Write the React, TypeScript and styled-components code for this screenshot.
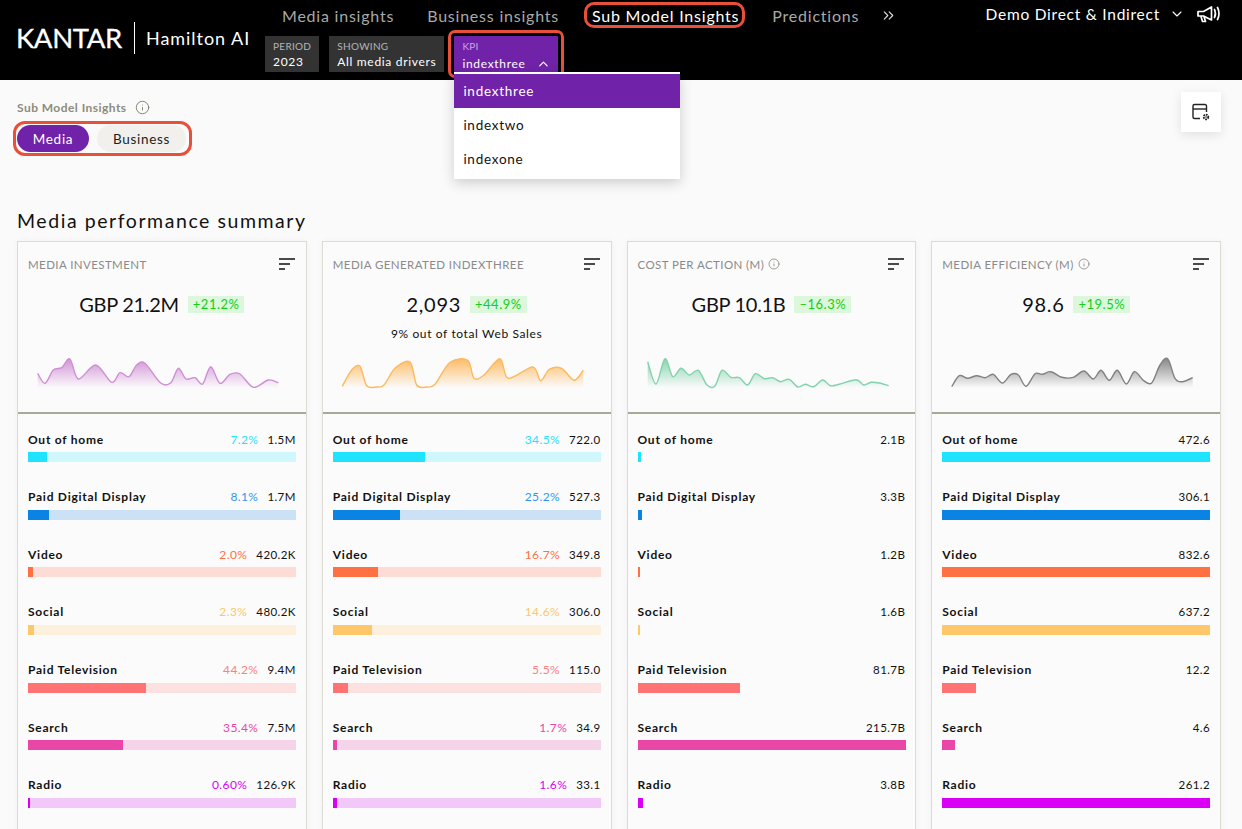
import React from "react";
import styled, { createGlobalStyle } from "styled-components";
import { Info, ChevronDown, ChevronUp, ChevronsRight } from "lucide-react";

const Global = createGlobalStyle`
  html, body { margin: 0; padding: 0; background: #fafafa; }
  body { font-family: "Lato", "Noto Sans", sans-serif; color: #111; overflow: hidden; }
  * { box-sizing: border-box; }
`;
const Page = styled.div`width: 1242px; height: 829px; overflow: hidden; background: #fafafa;`;
const Header = styled.header`position: relative; z-index: 2; display: flex; height: 80px; background: #000; color: #fff;`;
const Brand = styled.div`display: flex; align-items: center; width: 265px; height: 76px; padding-left: 16px;`;
const Logo = styled.span`font-size: 27.5px; line-height: 1; letter-spacing: -0.35px; font-weight: 400; width: 106px; white-space: nowrap; -webkit-text-stroke: 0.3px #fff;`;
const BrandRule = styled.span`width: 1px; height: 32px; margin: 0 11px 0 12px; background: #fff;`;
const Product = styled.span`font-size: 18px; letter-spacing: 0.95px; white-space: nowrap;`;
const Middle = styled.div`display: flex; flex-direction: column;`;
const Nav = styled.nav`display: flex; align-items: center; height: 30px; padding: 0 0 0 17px;`;
const NavItem = styled.span<{ $active?: boolean }>`
  position: relative; margin-right: 33px; font-size: 16px; letter-spacing: 0.78px; white-space: nowrap;
  color: ${p => p.$active ? "#fff" : "#a9a9a9"};
  ${p => p.$active && `
    &::after {
      content: ""; position: absolute; left: -8px; right: -6px; top: -4px; bottom: -3px;
      border: 3px solid #e8503a; border-radius: 10px;
    }
  `}
`;
const More = styled.span`display: flex; color: #ddd; margin-left: -12px;`;
const Chips = styled.div`display: flex; gap: 10px; margin-top: 6px;`;
const Chip = styled.div<{ $kpi?: boolean }>`
  position: relative; height: 36px; padding: 4px 8px; background: ${p => p.$kpi ? "#7023a8" : "#333"};
  ${p => p.$kpi && `outline: 3px solid #e8503a; outline-offset: 3px; border-radius: 1px; width: 104px;`}
`;
const ChipLabel = styled.div<{ $kpi?: boolean }>`font-size: 10px; line-height: 12px; letter-spacing: 0.3px; color: ${p => p.$kpi ? "#cda6e6" : "#b5b5b5"};`;
const ChipValue = styled.div`display: flex; align-items: center; gap: 10px; margin-top: 3px; font-size: 12px; line-height: 14px; letter-spacing: 0.68px; color: #fff; white-space: nowrap;`;
const Menu = styled.div`
  position: absolute; left: 0; top: 36px; width: 226px; height: 107px; padding-top: 2px; background: #fff;
  box-shadow: 0 4px 12px rgba(0,0,0,.18);
`;
const MenuItem = styled.div<{ $selected?: boolean }>`
  height: 34px; padding-left: 9px; display: flex; align-items: center;
  font-size: 13.5px; letter-spacing: 0.75px;
  background: ${p => p.$selected ? "#7023a8" : "#fff"}; color: ${p => p.$selected ? "#fff" : "#111"};
`;
const Account = styled.div`display: flex; align-items: center; margin-left: auto; height: 28px; padding-right: 21px; font-size: 15.5px; letter-spacing: 0.75px; white-space: nowrap;`;
const AccountIcon = styled.span`display: flex; margin: 0 12px 0 9px;`;
const Main = styled.main`padding: 0 21px 0 17px;`;
const Top = styled.div`display: flex; justify-content: space-between; align-items: flex-start; padding-top: 12px;`;
const Left = styled.div`padding-top: 7px;`;
const Crumb = styled.div`display: flex; align-items: center; gap: 8px; height: 16px; font-size: 12px; font-weight: 700; letter-spacing: 0.45px; color: #8c8c7c;`;
const Toggles = styled.div`
  display: inline-flex; gap: 8px; margin-top: 10px; padding-right: 2px; border-radius: 8px;
  outline: 3px solid #e8503a; outline-offset: 1px;
`;
const Toggle = styled.span<{ $on?: boolean }>`
  display: flex; align-items: center; justify-content: center; height: 27px; width: ${p => p.$on ? "72px" : "89px"};
  border-radius: 14px; font-size: 13.5px; letter-spacing: 0.7px;
  background: ${p => p.$on ? "#7023a8" : "#f1f0ed"}; color: ${p => p.$on ? "#fff" : "#222"};
`;
const SettingsButton = styled.div`
  display: flex; align-items: center; justify-content: center; width: 40px; height: 40px; background: #fff;
  box-shadow: 0 3px 10px rgba(0,0,0,.1);
`;
const Title = styled.h1`margin: 58px 0 9px; font-size: 19.5px; line-height: 22px; font-weight: 400; letter-spacing: 1.56px; color: #111;`;
const Grid = styled.div`display: grid; grid-template-columns: repeat(4, minmax(0, 1fr)); gap: 15px;`;
const Card = styled.section`border: 1px solid #dcdcd2; border-bottom: 0; height: 600px; box-shadow: 0 0 6px rgba(0,0,0,.04); background: #fbfbfb;`;
const Summary = styled.div`height: 172px; padding-top: 14px; border-bottom: 2px solid #a9a998; position: relative;`;
const CardHead = styled.div`display: flex; align-items: center; justify-content: space-between; height: 16px; margin: 0 11px 0 10px;`;
const CardTitle = styled.div`display: flex; align-items: center; gap: 4px; font-size: 11.5px; letter-spacing: 0.42px; color: #8a8a8a; white-space: nowrap;`;
const Headline = styled.div`display: flex; align-items: center; justify-content: center; gap: 9px; margin-top: 20px; height: 24px;`;
const Figure = styled.span<{ $tight?: boolean }>`font-size: 20px; letter-spacing: ${p => p.$tight ? "-0.3px" : "0.7px"}; color: #111;`;
const Delta = styled.span`padding: 0 5px; height: 17px; line-height: 17px; font-size: 13px; letter-spacing: 0.5px; background: #dcf7dc; color: #14cf14;`;
const SubNote = styled.div`margin-top: 11px; text-align: center; font-size: 12px; line-height: 14px; letter-spacing: 0.62px; color: #111;`;
const Spark = styled.svg`position: absolute; left: 0; top: 108px; display: block;`;
const Rows = styled.div`padding: 17px 10px 0;`;
const Row = styled.div`height: 57.67px;`;
const RowHead = styled.div`display: flex; align-items: center; height: 16px; font-size: 12px;`;
const RowName = styled.span`flex: 1; font-weight: 700; letter-spacing: 0.75px; color: #111;`;
const Pct = styled.span<{ $c: string }>`margin-right: 9px; color: ${p => p.$c}; letter-spacing: 0.4px;`;
const Val = styled.span`color: #111; font-size: 11.5px; letter-spacing: 0.4px;`;
const Track = styled.div<{ $bg: string }>`margin-top: 5px; height: 10px; background: ${p => p.$bg};`;
const Fill = styled.div<{ $c: string }>`height: 100%; background: ${p => p.$c};`;

type Pt = [number, number];
function smooth(pts: Pt[]) {
  let d = `M${pts[0][0].toFixed(1)} ${pts[0][1].toFixed(1)}`;
  for (let i = 0; i < pts.length - 1; i++) {
    const p0 = pts[i - 1] || pts[i], p1 = pts[i], p2 = pts[i + 1], p3 = pts[i + 2] || p2;
    const k = 0.16;
    d += ` C${(p1[0] + (p2[0] - p0[0]) * k).toFixed(1)} ${(p1[1] + (p2[1] - p0[1]) * k).toFixed(1)} ${(p2[0] - (p3[0] - p1[0]) * k).toFixed(1)} ${(p2[1] - (p3[1] - p1[1]) * k).toFixed(1)} ${p2[0].toFixed(1)} ${p2[1].toFixed(1)}`;
  }
  return d;
}
const Sparkline = ({ id, color, raw, ox, oy, cardX }: { id: string; color: string; raw: number[]; ox: number; oy: number; cardX: number }) => {
  const pts: Pt[] = [];
  for (let i = 0; i < raw.length; i += 2) pts.push([ox + raw[i] / 3 - cardX - 1, oy + raw[i + 1] / 3 - 350]);
  const line = smooth(pts);
  const base = 38;
  const area = `${line} L${pts[pts.length - 1][0]} ${base} L${pts[0][0]} ${base} Z`;
  return (
    <Spark width="288" height="50" viewBox="0 0 288 50">
      <defs>
        <linearGradient id={id} x1="0" y1="0" x2="0" y2="1">
          <stop offset="0" stopColor={color} stopOpacity="0.95" />
          <stop offset="1" stopColor={color} stopOpacity="0" />
        </linearGradient>
      </defs>
      <path d={area} fill={`url(#${id})`} />
      <path d={line} fill="none" stroke={color} strokeWidth="1.4" />
    </Spark>
  );
};
const SortIcon = () => (
  <svg width="16" height="13" viewBox="0 0 16 13"><path d="M0 1h16M0 6h11M0 11h6" stroke="#111" strokeWidth="1.6" fill="none" /></svg>
);
const Megaphone = () => (
  <svg width="24" height="20" viewBox="0 0 24 20" fill="none" stroke="#fff" strokeWidth="1.7" strokeLinejoin="round" strokeLinecap="round">
    <path d="M1 7.5h5.5L14.5 3v13L6.5 12H1z" />
    <path d="M4 12.5l1.5 5h3l-1.5-5" />
    <path d="M17.5 5.5c1.2 2.5 1.2 5.5 0 8" />
    <path d="M20.5 3.5c1.8 3.6 1.8 8.4 0 12" />
  </svg>
);
const SettingsIcon = () => (
  <svg width="20" height="20" viewBox="0 0 20 20" fill="none" stroke="#222" strokeWidth="1.4">
    <path d="M9 16.5H3.5a1.5 1.5 0 0 1-1.5-1.5V4a1.5 1.5 0 0 1 1.5-1.5h10.5A1.5 1.5 0 0 1 15.5 4v6" />
    <path d="M2 7h13.5" />
    <circle cx="15" cy="15" r="2.3" strokeWidth="1.8" strokeDasharray="1.6 .8" />
    <circle cx="15" cy="15" r="0.8" fill="#222" stroke="none" />
  </svg>
);

const names = ["Out of home", "Paid Digital Display", "Video", "Social", "Paid Television", "Search", "Radio"];
const colors = ["#1fe3ff", "#0a84e4", "#ff7043", "#fdc76a", "#ff7373", "#ea46a8", "#d900f5"];
const tracks = ["#cff7fc", "#cbe1f6", "#fcdcd5", "#fdf0dd", "#fde0e0", "#f5d3e8", "#f2c8f8"];
const pctColors = ["#1fe3ff", "#3296f0", "#ff7043", "#fdc76a", "#ff7f7f", "#ea46a8", "#d900f5"];

type CardData = {
  id: string; x: number; title: string; info?: boolean; figure: string; tight?: boolean; delta: string; note?: string; color: string;
  ox: number; oy: number; raw: number[]; rows: { p?: string; v: string; w: number }[]; noTrack?: boolean;
};
const cards: CardData[] = [
  {
    id: "a", x: 17, title: "MEDIA INVESTMENT", figure: "GBP 21.2M", tight: true, delta: "+21.2%", color: "#cf8ed4", ox: 0, oy: 200,
    raw: [113,520,135,550,160,510,185,503,210,477,235,537,287,495,335,547,360,518,387,530,410,495,435,490,482,549,512,549,535,505,558,537,585,533,608,552,632,500,660,550,690,523,720,522,760,562,805,540,835,548],
    rows: [{ p: "7.2%", v: "1.5M", w: 19 }, { p: "8.1%", v: "1.7M", w: 21 }, { p: "2.0%", v: "420.2K", w: 5 }, { p: "2.3%", v: "480.2K", w: 6 }, { p: "44.2%", v: "9.4M", w: 118 }, { p: "35.4%", v: "7.5M", w: 95 }, { p: "0.60%", v: "126.9K", w: 2 }],
  },
  {
    id: "b", x: 322, title: "MEDIA GENERATED INDEXTHREE", figure: "2,093", delta: "+44.9%", note: "9% out of total Web Sales", color: "#fdb95f", ox: 320, oy: 235,
    raw: [67,454,95,405,120,394,140,452,170,456,192,450,225,400,270,381,290,450,320,456,345,448,390,382,443,376,462,430,492,420,540,371,565,430,638,396,662,437,688,403,725,400,762,436,790,406],
    rows: [{ p: "34.5%", v: "722.0", w: 92 }, { p: "25.2%", v: "527.3", w: 67 }, { p: "16.7%", v: "349.8", w: 45 }, { p: "14.6%", v: "306.0", w: 39 }, { p: "5.5%", v: "115.0", w: 15 }, { p: "1.7%", v: "34.9", w: 4 }, { p: "1.6%", v: "33.1", w: 4 }],
  },
  {
    id: "c", x: 626, title: "COST PER ACTION (M)", info: true, figure: "GBP 10.1B", tight: true, delta: "–16.3%", color: "#82d2ac", ox: 620, oy: 235,
    raw: [80,380,105,447,132,371,155,425,180,400,205,420,232,406,258,450,282,453,303,406,330,427,355,428,380,450,403,416,430,431,455,428,478,440,505,433,530,456,553,448,578,455,605,435,628,452,655,448,705,434,728,450,750,442,775,444,803,452],
    noTrack: true,
    rows: [{ v: "2.1B", w: 3 }, { v: "3.3B", w: 4 }, { v: "1.2B", w: 2 }, { v: "1.6B", w: 2 }, { v: "81.7B", w: 102 }, { v: "215.7B", w: 268 }, { v: "3.8B", w: 5 }],
  },
  {
    id: "d", x: 931, title: "MEDIA EFFICIENCY (M)", info: true, figure: "98.6", delta: "+19.5%", color: "#808080", ox: 925, oy: 235,
    raw: [80,455,103,422,128,430,155,422,180,428,205,418,232,444,258,418,280,420,303,454,330,416,352,418,378,410,410,427,445,427,477,408,505,432,528,406,553,436,577,406,604,447,628,410,655,436,680,444,705,390,728,371,750,430,772,440,803,428],
    noTrack: true,
    rows: [{ v: "472.6", w: 268 }, { v: "306.1", w: 268 }, { v: "832.6", w: 268 }, { v: "637.2", w: 268 }, { v: "12.2", w: 34 }, { v: "4.6", w: 13 }, { v: "261.2", w: 268 }],
  },
];

export default function App() {
  return (
    <Page>
      <Global />
      <Header>
        <Brand>
          <Logo>KANTAR</Logo>
          <BrandRule />
          <Product>Hamilton AI</Product>
        </Brand>
        <Middle>
          <Nav>
            <NavItem>Media insights</NavItem>
            <NavItem>Business insights</NavItem>
            <NavItem $active>Sub Model Insights</NavItem>
            <NavItem>Predictions</NavItem>
            <More><ChevronsRight size={17} strokeWidth={1.6} /></More>
          </Nav>
          <Chips>
            <Chip>
              <ChipLabel>PERIOD</ChipLabel>
              <ChipValue>2023</ChipValue>
            </Chip>
            <Chip>
              <ChipLabel>SHOWING</ChipLabel>
              <ChipValue>All media drivers</ChipValue>
            </Chip>
            <Chip $kpi>
              <ChipLabel $kpi>KPI</ChipLabel>
              <ChipValue>indexthree <ChevronUp size={18} strokeWidth={2} /></ChipValue>
              <Menu>
                <MenuItem $selected>indexthree</MenuItem>
                <MenuItem>indextwo</MenuItem>
                <MenuItem>indexone</MenuItem>
              </Menu>
            </Chip>
          </Chips>
        </Middle>
        <Account>
          Demo Direct &amp; Indirect
          <AccountIcon><ChevronDown size={16} strokeWidth={1.6} /></AccountIcon>
          <Megaphone />
        </Account>
      </Header>
      <Main>
        <Top>
          <Left>
            <Crumb>Sub Model Insights <Info size={15} strokeWidth={1.4} color="#77776a" /></Crumb>
            <Toggles>
              <Toggle $on>Media</Toggle>
              <Toggle>Business</Toggle>
            </Toggles>
          </Left>
          <SettingsButton><SettingsIcon /></SettingsButton>
        </Top>
        <Title>Media performance summary</Title>
        <Grid>
          {cards.map(c => (
            <Card key={c.id}>
              <Summary>
                <CardHead>
                  <CardTitle>{c.title}{c.info && <Info size={12} strokeWidth={1.4} color="#77776a" />}</CardTitle>
                  <SortIcon />
                </CardHead>
                <Headline>
                  <Figure $tight={c.tight}>{c.figure}</Figure>
                  <Delta>{c.delta}</Delta>
                </Headline>
                {c.note && <SubNote>{c.note}</SubNote>}
                <Sparkline id={c.id} color={c.color} raw={c.raw} ox={c.ox} oy={c.oy} cardX={c.x} />
              </Summary>
              <Rows>
                {c.rows.map((r, i) => (
                  <Row key={names[i]}>
                    <RowHead>
                      <RowName>{names[i]}</RowName>
                      {r.p && <Pct $c={pctColors[i]}>{r.p}</Pct>}
                      <Val>{r.v}</Val>
                    </RowHead>
                    <Track $bg={c.noTrack ? "transparent" : tracks[i]}>
                      <Fill $c={colors[i]} style={{ width: r.w }} />
                    </Track>
                  </Row>
                ))}
              </Rows>
            </Card>
          ))}
        </Grid>
      </Main>
    </Page>
  );
}
